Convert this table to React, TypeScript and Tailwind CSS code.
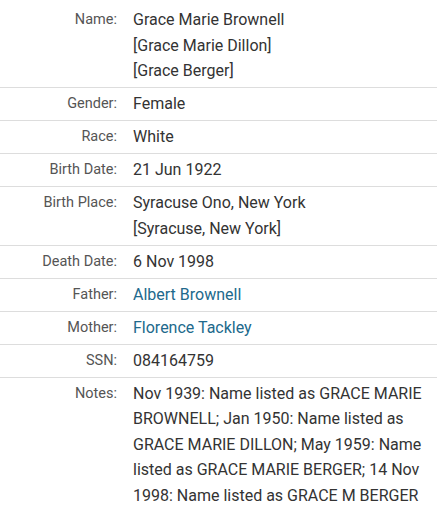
type Row = { label: string; lines: string[]; link?: boolean };

const rows: Row[] = [
  { label: 'Name', lines: ['Grace Marie Brownell', '[Grace Marie Dillon]', '[Grace Berger]'] },
  { label: 'Gender', lines: ['Female'] },
  { label: 'Race', lines: ['White'] },
  { label: 'Birth Date', lines: ['21 Jun 1922'] },
  { label: 'Birth Place', lines: ['Syracuse Ono, New York', '[Syracuse, New York]'] },
  { label: 'Death Date', lines: ['6 Nov 1998'] },
  { label: 'Father', lines: ['Albert Brownell'], link: true },
  { label: 'Mother', lines: ['Florence Tackley'], link: true },
  { label: 'SSN', lines: ['084164759'] },
  {
    label: 'Notes',
    lines: [
      'Nov 1939: Name listed as GRACE MARIE BROWNELL; Jan 1950: Name listed as GRACE MARIE DILLON; May 1959: Name listed as GRACE MARIE BERGER; 14 Nov 1998: Name listed as GRACE M BERGER',
    ],
  },
];

export default function App() {
  return (
    <div className="bg-white w-[437px] h-[514px] overflow-hidden pt-[4px] font-['Roboto','Liberation_Sans',sans-serif]">
      <dl>
        {rows.map((row, i) => (
          <div
            key={row.label}
            className={`flex items-start py-[3.2px] ${i < rows.length - 1 ? 'border-b border-[#dddddd]' : ''}`}
          >
            <dt className="w-[117px] shrink-0 pt-[1px] text-right text-[14.5px] leading-[24.6px] text-[#555555]">
              {row.label}:
            </dt>
            <dd className="flex-1 min-w-0 pl-[16px] pr-[2px] text-[16px] leading-[25.6px]">
              {row.lines.map(line => (
                <div key={line} className={row.link ? 'text-[#21698c]' : 'text-[#333333]'}>
                  {line}
                </div>
              ))}
            </dd>
          </div>
        ))}
      </dl>
    </div>
  );
}
